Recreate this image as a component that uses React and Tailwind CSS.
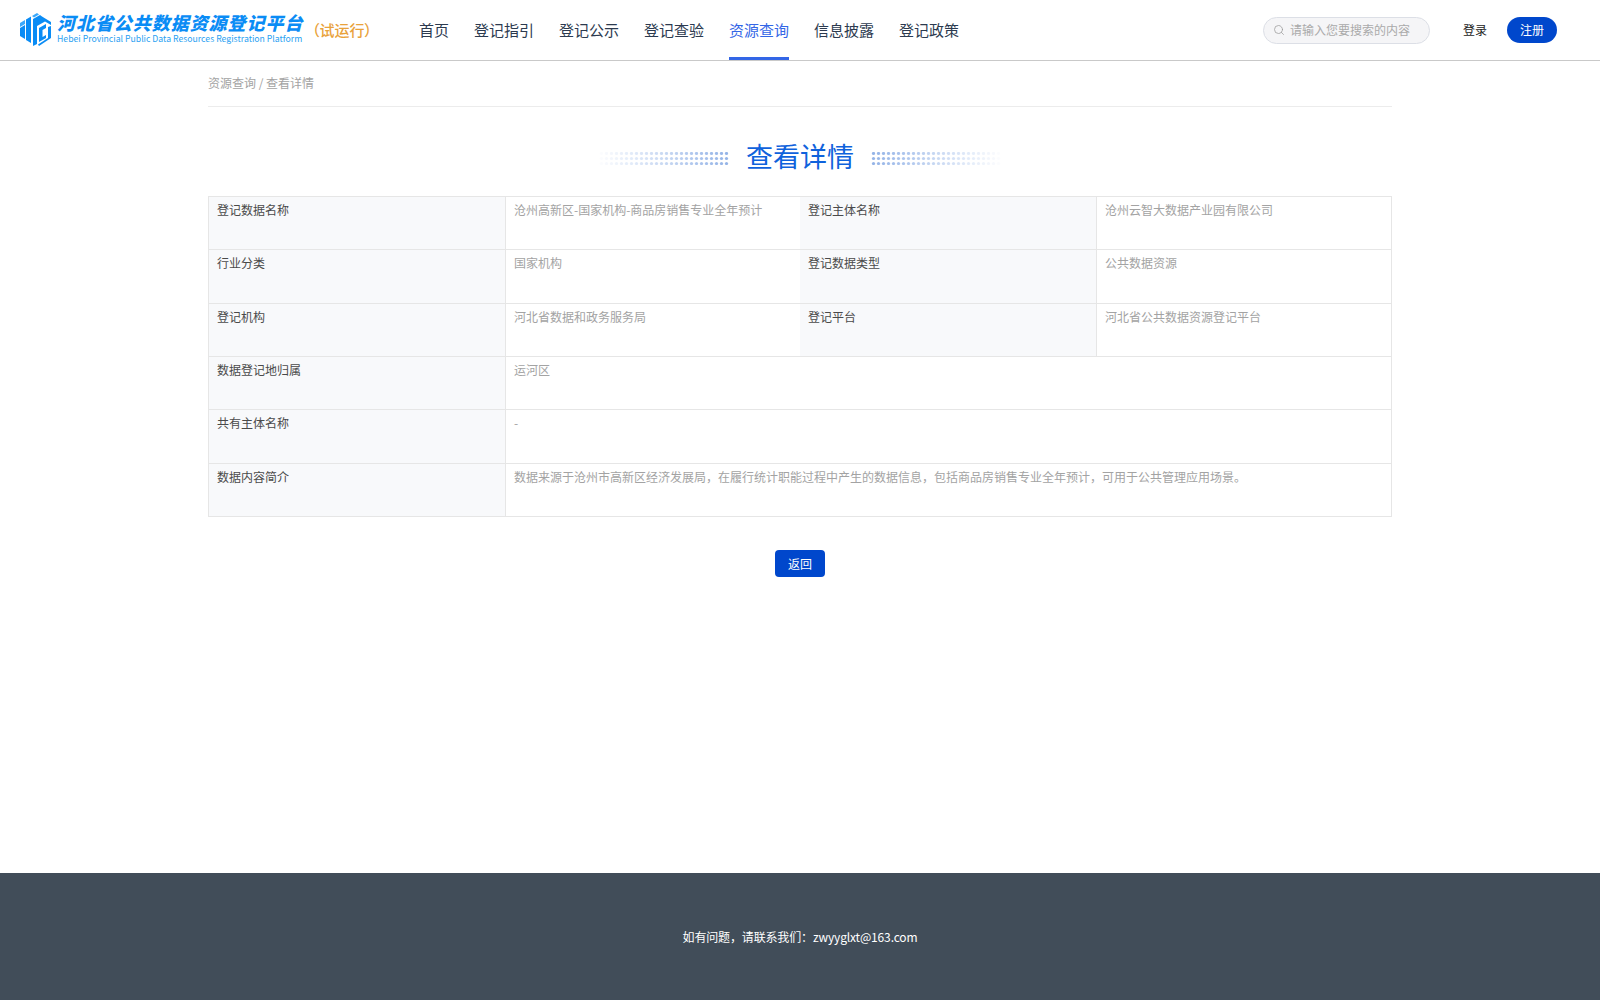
import { Search } from 'lucide-react'

const navItems = ['首页', '登记指引', '登记公示', '登记查验', '资源查询', '信息披露', '登记政策']

// rows of the detail table: [label, value, label, value], two-cell rows span the width
const rows = [
  ['登记数据名称', '沧州高新区-国家机构-商品房销售专业全年预计', '登记主体名称', '沧州云智大数据产业园有限公司'],
  ['行业分类', '国家机构', '登记数据类型', '公共数据资源'],
  ['登记机构', '河北省数据和政务服务局', '登记平台', '河北省公共数据资源登记平台'],
  ['数据登记地归属', '运河区'],
  ['共有主体名称', '-'],
  ['数据内容简介', '数据来源于沧州市高新区经济发展局，在履行统计职能过程中产生的数据信息，包括商品房销售专业全年预计，可用于公共管理应用场景。'],
]

function Logo() {
  return (
    <svg width="32" height="34" viewBox="0 0 32 34" className="shrink-0">
      <g fill="#0a8cf5">
        <path d="M0 10 L5 7 L5 11 L0 14 Z" fill="#3aa8fb" />
        <path d="M0 15 L5 12 L5 26 L0 23 Z" />
        <path d="M6 6.500 L11 3.500 L11 30 L6 27 Z" />
        <path d="M12 3 L17 0 L19 1.500 L14 4.500 Z" fill="#3aa8fb" />
        <path d="M20 2 L13 6 L13 33 L17 31 L17 13 L25 8.500 L31 12 L31 9 L22 3.500 Z" />
        <path d="M19 15 L26 11 L26 15 L22.500 17 L22.500 24 L26 22 L26 25 L19 29 Z" />
        <path d="M28 14 L31 13 L31 25 L19 33 L18 31.500 L28 25 Z" />
      </g>
    </svg>
  )
}

function Dots({ flip }) {
  const cols = Array.from({ length: 26 }, (_, i) => i)
  return (
    <svg width="130" height="13" viewBox="0 0 130 13" className={flip ? 'shrink-0 rotate-180' : 'shrink-0'}>
      {[1.5, 6.5, 11.5].map(y => cols.map(i => (
        <circle key={`${y}-${i}`} cx={i * 5 + 2.5} cy={y} r="1.6" fill="#8fb0e6" opacity={(i + 1) / 26 * 0.95} />
      )))}
    </svg>
  )
}

function Cell({ children, label, className = '' }) {
  return (
    <div className={`pl-2 pr-2 pt-[4px] text-xs leading-[18px] ${label ? 'bg-[#f8f9fb] text-[#4a4a4a]' : 'text-[#a3a3a3]'} ${className}`}>
      {children}
    </div>
  )
}

export default function App() {
  return (
    <div className="flex min-h-screen flex-col bg-white font-['Noto_Sans_CJK_SC','Noto_Sans',sans-serif]">
      {/* Header */}
      <header className="flex h-[61px] items-stretch border-b border-[#c9c9c9] pl-[20px]">
        <div className="flex w-[399px] items-center">
          <Logo />
          <div className="mb-[3px] ml-[5px] w-[248px]">
            <div className="h-[20px] text-[18px] font-black italic leading-[18px] tracking-[0.95px] whitespace-nowrap text-[#0a8cf5]">河北省公共数据资源登记平台</div>
            <div className="text-[8.7px] leading-[11px] whitespace-nowrap text-[#2a9ff2]">Hebei Provincial Public Data Resources Registration Platform</div>
          </div>
          <span className="ml-[7px] text-[15px] font-medium whitespace-nowrap text-[#e9a23b] [font-feature-settings:'palt']">（试运行）</span>
        </div>
        <nav className="flex gap-[25px]">
          {navItems.map(item => (
            <a key={item} className={`flex h-full items-center border-b-[3px] pt-[3px] text-[15px] whitespace-nowrap ${item === '资源查询' ? 'border-[#3366e6] text-[#3366e6]' : 'border-transparent text-[#2c3a4f]'}`}>
              {item}
            </a>
          ))}
        </nav>
        <div className="ml-auto flex items-center pr-[43px]">
          <div className="flex h-[27px] w-[167px] items-center rounded-full border border-[#dcdfe6] bg-[#f5f5f7] pl-[9px]">
            <Search size={12} strokeWidth={1.5} className="text-[#9a9a9a]" />
            <span className="ml-[5px] text-xs text-[#aaa]">请输入您要搜索的内容</span>
          </div>
          <span className="ml-[33px] text-xs text-[#222]">登录</span>
          <button className="ml-[20px] h-[26px] w-[50px] rounded-full bg-[#0047cc] text-xs text-white">注册</button>
        </div>
      </header>

      {/* Content */}
      <main className="mx-auto w-[1184px] flex-1">
        <div className="flex h-[46px] items-center border-b border-[#ececec] pb-[2px] text-xs text-[#a3a3a3]">资源查询 / 查看详情</div>

        <div className="mt-[29px] flex h-[44px] items-center justify-center gap-[17px]">
          <Dots />
          <h1 className="pb-[4px] text-[27px] leading-[44px] font-normal text-[#0f62dc]">查看详情</h1>
          <Dots flip />
        </div>

        <div className="mt-[16px] grid grid-cols-[297px_294px_297px_1fr] auto-rows-[53.33px] border-t border-l border-[#e6e6e6]">
          {rows.map(row => row.length === 4 ? (
            <div key={row[0]} className="col-span-4 grid grid-cols-subgrid border-b border-r border-[#e6e6e6]">
              <Cell label className="border-r border-[#e6e6e6]">{row[0]}</Cell>
              <Cell>{row[1]}</Cell>
              <Cell label className="border-r border-[#e6e6e6]">{row[2]}</Cell>
              <Cell>{row[3]}</Cell>
            </div>
          ) : (
            <div key={row[0]} className="col-span-4 grid grid-cols-subgrid border-b border-r border-[#e6e6e6]">
              <Cell label className="border-r border-[#e6e6e6]">{row[0]}</Cell>
              <Cell className="col-span-3">{row[1]}</Cell>
            </div>
          ))}
        </div>

        <div className="mt-[33px] flex justify-center">
          <button className="h-[27px] w-[50px] rounded-[4px] bg-[#0047cc] pt-px text-xs text-white">返回</button>
        </div>
      </main>

      {/* Footer */}
      <footer className="flex h-[127px] items-center justify-center bg-[#414d59] text-xs tracking-[-0.15px] text-white">
        如有问题，请联系我们：zwyyglxt@163.com
      </footer>
    </div>
  )
}
